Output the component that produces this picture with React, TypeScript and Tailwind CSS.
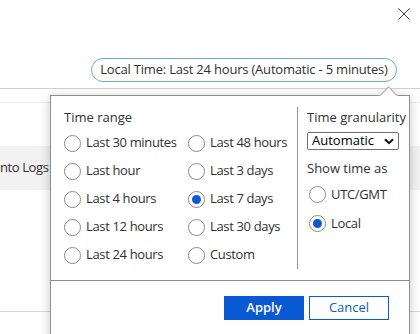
import { useState } from 'react'

const leftRanges = ['Last 30 minutes', 'Last hour', 'Last 4 hours', 'Last 12 hours', 'Last 24 hours']
const rightRanges = ['Last 48 hours', 'Last 3 days', 'Last 7 days', 'Last 30 days', 'Custom']

function Radio({ label, checked, onClick }: { label: string; checked: boolean; onClick: () => void }) {
  return (
    <div className="flex items-center h-[28px] cursor-pointer" onClick={onClick}>
      <span className="w-[17px] h-[17px] rounded-full border border-[#8a8a8a] bg-white flex items-center justify-center shrink-0">
        {checked && <span className="w-[9px] h-[9px] rounded-full bg-[#0a5bd3]" />}
      </span>
      <span className="ml-[5px] whitespace-nowrap tracking-[-0.35px]">{label}</span>
    </div>
  )
}

export default function App() {
  const [range, setRange] = useState('Last 7 days')
  const [zone, setZone] = useState('Local')

  return (
    <div
      className="relative w-[420px] h-[334px] overflow-hidden bg-white text-[13px] text-[#323130]"
      style={{ fontFamily: '"Open Sans", "Noto Sans", sans-serif' }}
    >
      {/* close */}
      <div className="flex justify-end pt-[8px] pr-[10px] h-[58px]">
        <svg width="12" height="12" viewBox="0 0 12 12" className="text-[#444]">
          <path d="M0.5 0.5 L11.5 11.5 M11.5 0.5 L0.5 11.5" stroke="currentColor" strokeWidth="1" fill="none" />
        </svg>
      </div>

      {/* time pill */}
      <div className="flex justify-end pr-[23px]">
        <button className="h-[24px] w-[306px] rounded-full border border-[#6aaae6] bg-white text-[13px] text-[#323130] flex items-center justify-center tracking-[-0.2px]">
          Local Time: Last 24 hours (Automatic - 5 minutes)
        </button>
      </div>

      {/* page behind */}
      <div className="mt-[6px] border-t border-[#d0d0d0]" />
      <div className="mt-[13px] border-t border-[#ececec]" />
      <div className="mt-[43px] h-[44px] bg-[#f2f2f2] flex items-center">
        <span className="whitespace-nowrap tracking-[-0.4px]">nto Logs</span>
      </div>
      <div className="mt-[121px] border-t border-[#d8d8d8]" />

      {/* popup */}
      <div className="absolute left-[50px] top-[95px] w-[360px] h-[260px] bg-white border border-[#8f8f8f] shadow-[0_2px_10px_rgba(0,0,0,0.22)]">
        {/* caret */}
        <div className="absolute -top-[7px] right-[14px] w-[13px] h-[13px] bg-white border-l border-t border-[#a8a8a8] rotate-45" />

        <div className="flex h-[184px] pt-[11px]">
          <div className="w-[246px] pl-[13px]">
            <div className="h-[20px] leading-[20px]">Time range</div>
            <div className="flex mt-[2px]">
              <div className="w-[124px]">
                {leftRanges.map((r) => (
                  <Radio key={r} label={r} checked={range === r} onClick={() => setRange(r)} />
                ))}
              </div>
              <div>
                {rightRanges.map((r) => (
                  <Radio key={r} label={r} checked={range === r} onClick={() => setRange(r)} />
                ))}
              </div>
            </div>
          </div>

          <div className="h-[162px] border-l border-[#8f8f8f] pl-[9px]">
            <div className="h-[20px] leading-[20px]">Time granularity</div>
            <div className="mt-[5px] w-[92px] h-[18px] border border-[#707070] rounded-[2px] flex items-center justify-between pl-[4px] pr-[4px] text-black">
              <span>Automatic</span>
              <svg width="10" height="7" viewBox="0 0 10 7">
                <path d="M1 1.2 L5 5.2 L9 1.2" stroke="#111" strokeWidth="2" fill="none" />
              </svg>
            </div>
            <div className="mt-[8px] h-[20px] leading-[20px]">Show time as</div>
            <div className="mt-[2px] pl-[2px]">
              <div className="h-[29px] flex items-center">
                <Radio label="UTC/GMT" checked={zone === 'UTC/GMT'} onClick={() => setZone('UTC/GMT')} />
              </div>
              <div className="h-[29px] flex items-center">
                <Radio label="Local" checked={zone === 'Local'} onClick={() => setZone('Local')} />
              </div>
            </div>
          </div>
        </div>

        <div className="border-t border-[#8f8f8f] flex justify-end gap-[5px] pt-[15px] pr-[20px]">
          <button className="w-[80px] h-[24px] bg-[#0a5bd3] text-white font-semibold">Apply</button>
          <button className="w-[80px] h-[24px] border border-[#0a5bd3] text-[#0a5bd3] bg-white">Cancel</button>
        </div>
      </div>
    </div>
  )
}
